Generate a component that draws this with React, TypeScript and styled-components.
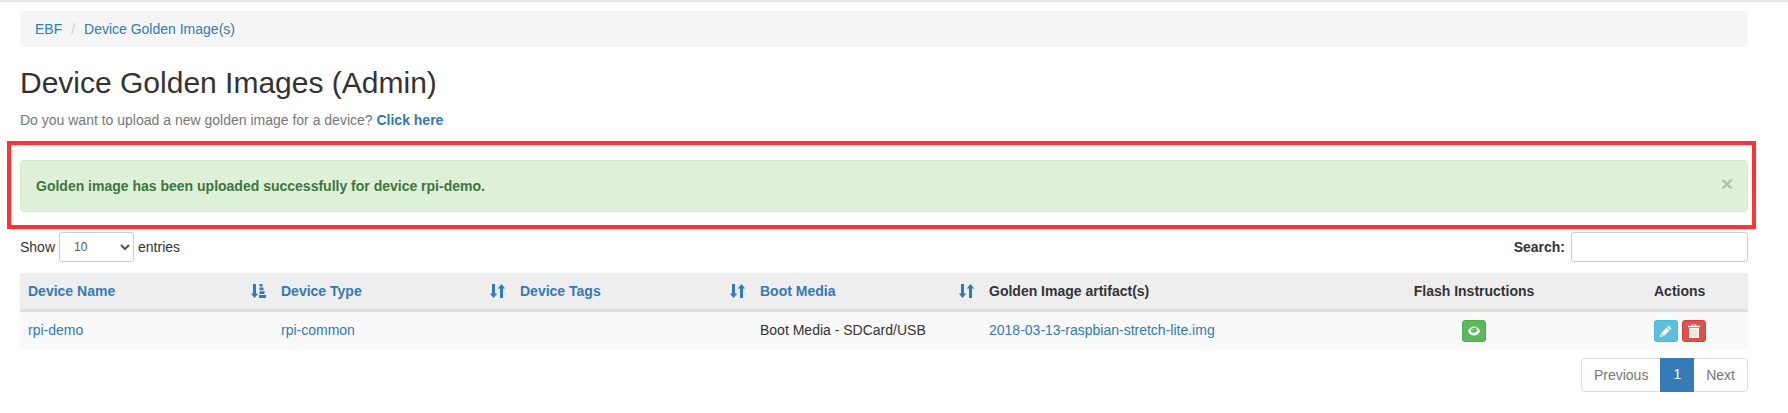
import React from 'react'
import styled, { createGlobalStyle } from 'styled-components'

const Global = createGlobalStyle`
  html, body {
    margin: 0;
    background: #fff;
    font-family: "Liberation Sans", Arial, sans-serif;
    font-size: 14px;
    line-height: 20px;
    color: #333;
  }
  * { box-sizing: border-box; }
`

const TopLine = styled('div')`
  height: 2px;
  background: #e7e7e7;
`
const Page = styled('div')`
  padding: 9px 40px 0 20px;
`
const Crumbs = styled('ol')`
  display: flex;
  margin: 0;
  padding: 8px 15px;
  list-style: none;
  background: #f5f5f5;
  border-radius: 4px;
`
const Crumb = styled('li')`
  & + &::before {
    content: '/\\00a0';
    padding: 0 5px;
    margin-left: 4px;
    color: #ccc;
  }
`
const Link = styled('a')<{ $bold?: boolean }>`
  color: #337ab7;
  text-decoration: none;
  font-weight: ${(p) => (p.$bold ? 'bold' : 'normal')};
`
const Title = styled('h1')`
  margin: 19px 0 11px;
  font-size: 30px;
  font-weight: 500;
  line-height: 33px;
  color: #333;
`
const Lead = styled('p')`
  margin: 0 0 30px;
  color: #777;
`
const AlertWrap = styled('div')`
  position: relative;
  margin-bottom: 20px;
`
const Highlight = styled('div')`
  position: absolute;
  top: -19px;
  left: -13px;
  right: -8px;
  bottom: -17px;
  border: 4px solid #ff3333;
  pointer-events: none;
`
const Alert = styled('div')`
  display: flex;
  justify-content: space-between;
  align-items: center;
  padding: 15px 14px 15px 15px;
  background: #dff0d8;
  border: 1px solid #d6e9c6;
  border-radius: 4px;
  color: #3c763d;
  font-weight: bold;
`
const Close = styled('span')`
  font-size: 21px;
  line-height: 20px;
  color: #000;
  opacity: 0.2;
  position: relative;
  top: -2px;
`
const Controls = styled('div')`
  display: flex;
  justify-content: space-between;
  align-items: center;
  height: 30px;
  margin-bottom: 11px;
`
const Label = styled('label')<{ $bold?: boolean }>`
  display: flex;
  align-items: center;
  gap: 4px;
  font-weight: ${(p) => (p.$bold ? 'bold' : 'normal')};
`
const Select = styled('select')`
  width: 75px;
  height: 30px;
  padding: 5px 10px;
  font: 12px "Liberation Sans", Arial, sans-serif;
  color: #555;
  background: #fff;
  border: 1px solid #ccc;
  border-radius: 3px;
`
const SearchInput = styled('input')`
  width: 177px;
  height: 30px;
  margin-left: 2px;
  border: 1px solid #ccc;
  border-radius: 3px;
  background: #fff;
`
const Table = styled('table')`
  width: 100%;
  table-layout: fixed;
  border-collapse: separate;
  border-spacing: 0;
`
const HeadRow = styled('tr')`
  background: #eee;
`
const BodyRow = styled('tr')`
  background: #f9f9f9;
`
const Th = styled('th')<{ $center?: boolean }>`
  height: 39px;
  padding: 8px;
  text-align: ${(p) => (p.$center ? 'center' : 'left')};
  border-bottom: 3px solid #ddd;
  font-weight: bold;
`
const ThInner = styled('div')`
  display: flex;
  justify-content: space-between;
  align-items: center;
  color: #337ab7;

  svg {
    margin-right: -1px;
  }
`
const Td = styled('td')`
  height: 38px;
  padding: 8px;
  vertical-align: top;
`
const ActionRow = styled('div')<{ $center?: boolean }>`
  display: flex;
  justify-content: ${(p) => (p.$center ? 'center' : 'flex-start')};
  gap: 4px;
`
const IconButton = styled('button')<{ $color: string; $border: string }>`
  display: flex;
  align-items: center;
  justify-content: center;
  width: 24px;
  height: 22px;
  padding: 0;
  background: ${(p) => p.$color};
  border: 1px solid ${(p) => p.$border};
  border-radius: 3px;
`
const PagerRow = styled('div')`
  display: flex;
  justify-content: flex-end;
  margin-top: 8px;
`
const Pager = styled('div')`
  display: flex;
  height: 34px;
  border: 1px solid #ddd;
  border-radius: 4px;
`
const PageItem = styled('span')<{ $active?: boolean }>`
  padding: 6px ${(p) => (p.$active ? '13px' : '12px')};
  margin: ${(p) => (p.$active ? '-1px 0' : '0')};
  height: ${(p) => (p.$active ? '34px' : '32px')};
  background: ${(p) => (p.$active ? '#337ab7' : 'transparent')};
  color: ${(p) => (p.$active ? '#fff' : '#777')};
`

const SortIcon = ({ sorted }: { sorted?: boolean }) => (
  <svg width="15" height="14" viewBox="0 0 15 14" fill="#337ab7">
    <path d="M2 0h3v9.5h2.3L3.5 14 -.3 9.5H2z" />
    {sorted ? (
      <path d="M8.5 0h3v2.6h-3zM8.5 3.6h4v2.6h-4zM8.5 7.2h5v2.8h-5zM8 11h7v3H8z" />
    ) : (
      <path d="M10 14h3V4.5h2.3L11.5 0 7.7 4.5H10z" />
    )}
  </svg>
)

const EyeIcon = () => (
  <svg width="12" height="10" viewBox="0 0 12 10">
    <path fill="#fff" d="M0 5C1.4 2 3.4.4 6 .4S10.6 2 12 5c-1.4 3-3.4 4.6-6 4.6S1.4 8 0 5z" />
    <circle cx="6" cy="4.6" r="3" fill="#5cb85c" />
    <path fill="#fff" d="M4 3.4a1.2 1.2 0 0 1 2.2.4c-.7-.4-1.5-.3-2.2-.4z" />
    <path fill="none" stroke="#fff" strokeWidth="1" d="M3 6.4c1.6 1.2 4.4 1.2 6.4-.6" />
  </svg>
)

const PencilIcon = () => (
  <svg width="12" height="12" viewBox="0 0 12 12" fill="#fff">
    <path d="M8.6.6l2.8 2.8-1.3 1.3-2.8-2.8zM6.6 2.6l2.8 2.8-5.6 5.6-2.8-2.8zM.4 9l2.6 2.6-3 .4z" />
  </svg>
)

const TrashIcon = () => (
  <svg width="12" height="14" viewBox="0 0 12 14" fill="#fff">
    <path d="M4 .4h4l.4 1.4H12v1.4H0V1.8h3.6zM4.8 1.1l-.2.7h2.8l-.2-.7z" />
    <path d="M1 4h10v10H1z" />
    <path d="M2.6 5h1v8h-1zM4.6 5h1v8h-1zM6.6 5h1v8h-1zM8.6 5h1v8h-1z" fill="#f5c9a8" />
  </svg>
)

const columns = [253, 239, 240, 229, 321, 344, 102]
const sortable = [
  { label: 'Device Name', sorted: true },
  { label: 'Device Type' },
  { label: 'Device Tags' },
  { label: 'Boot Media' },
]

export default function App() {
  return (
    <>
      <Global />
      <TopLine />
      <Page>
        <Crumbs>
          <Crumb><Link href="#">EBF</Link></Crumb>
          <Crumb><Link href="#">Device Golden Image(s)</Link></Crumb>
        </Crumbs>
        <Title>Device Golden Images (Admin)</Title>
        <Lead>
          Do you want to upload a new golden image for a device? <Link href="#" $bold>Click here</Link>
        </Lead>
        <AlertWrap>
          <Alert>
            <span>Golden image has been uploaded successfully for device rpi-demo.</span>
            <Close>×</Close>
          </Alert>
          <Highlight />
        </AlertWrap>
        <Controls>
          <Label>
            Show
            <Select defaultValue="10">
              <option>10</option>
              <option>25</option>
              <option>50</option>
              <option>100</option>
            </Select>
            entries
          </Label>
          <Label $bold>
            Search:
            <SearchInput type="search" />
          </Label>
        </Controls>
        <Table>
          <colgroup>
            {columns.map((w, i) => (
              <col key={i} width={w} />
            ))}
          </colgroup>
          <thead>
            <HeadRow>
              {sortable.map((c) => (
                <Th key={c.label}>
                  <ThInner>
                    {c.label}
                    <SortIcon sorted={c.sorted} />
                  </ThInner>
                </Th>
              ))}
              <Th>Golden Image artifact(s)</Th>
              <Th $center>Flash Instructions</Th>
              <Th>Actions</Th>
            </HeadRow>
          </thead>
          <tbody>
            <BodyRow>
              <Td><Link href="#">rpi-demo</Link></Td>
              <Td><Link href="#">rpi-common</Link></Td>
              <Td />
              <Td>Boot Media - SDCard/USB</Td>
              <Td><Link href="#">2018-03-13-raspbian-stretch-lite.img</Link></Td>
              <Td>
                <ActionRow $center>
                  <IconButton $color="#5cb85c" $border="#4cae4c"><EyeIcon /></IconButton>
                </ActionRow>
              </Td>
              <Td>
                <ActionRow>
                  <IconButton $color="#5bc0de" $border="#46b8da"><PencilIcon /></IconButton>
                  <IconButton $color="#d9534f" $border="#d43f3a"><TrashIcon /></IconButton>
                </ActionRow>
              </Td>
            </BodyRow>
          </tbody>
        </Table>
        <PagerRow>
          <Pager>
            <PageItem>Previous</PageItem>
            <PageItem $active>1</PageItem>
            <PageItem>Next</PageItem>
          </Pager>
        </PagerRow>
      </Page>
    </>
  )
}
